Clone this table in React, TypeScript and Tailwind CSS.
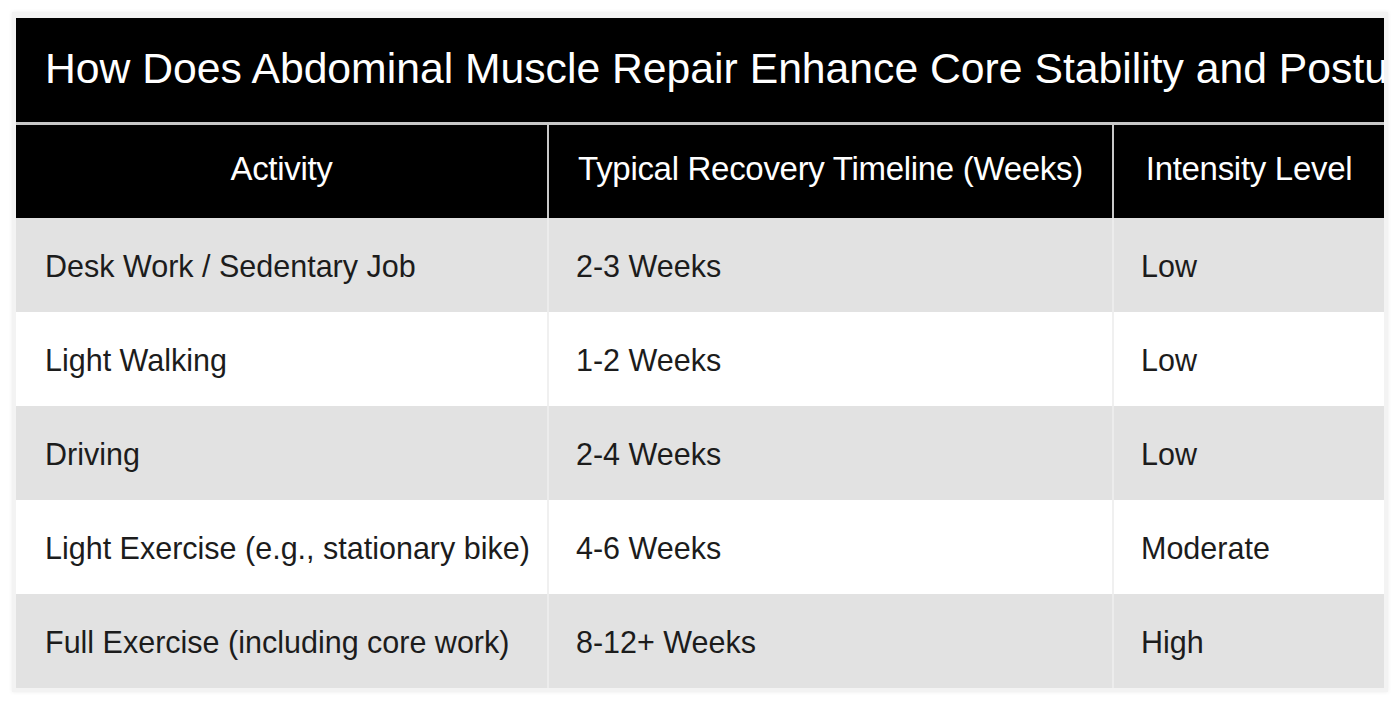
const rows = [
  { activity: "Desk Work / Sedentary Job", timeline: "2-3 Weeks", level: "Low" },
  { activity: "Light Walking", timeline: "1-2 Weeks", level: "Low" },
  { activity: "Driving", timeline: "2-4 Weeks", level: "Low" },
  { activity: "Light Exercise (e.g., stationary bike)", timeline: "4-6 Weeks", level: "Moderate" },
  { activity: "Full Exercise (including core work)", timeline: "8-12+ Weeks", level: "High" },
];

export default function App() {
  return (
    <div className="w-[1400px] h-[703px] bg-white p-3 font-['Liberation_Sans',Arial,sans-serif]">
      <div className="bg-[#f3f3f3] px-1 pt-[6px] pb-1 shadow-[0_0_4px_rgba(0,0,0,0.08)]">
        <div className="h-[104px] bg-black flex items-center px-[29px] overflow-hidden">
          <h1 className="text-white text-[42.7px] whitespace-nowrap pb-[4px]">
            How Does Abdominal Muscle Repair Enhance Core Stability and Posture?
          </h1>
        </div>
        <div className="h-[3px] bg-[#c8c8c8]" />
        <div className="grid grid-cols-[531px_563px_270px] gap-x-[2px] bg-[#c8c8c8] h-[93px]">
          <div className="bg-black text-white text-[33px] tracking-[-0.3px] flex items-center justify-center pb-[6px]">
            Activity
          </div>
          <div className="bg-black text-white text-[33px] tracking-[-0.3px] flex items-center justify-center pb-[6px]">
            Typical Recovery Timeline (Weeks)
          </div>
          <div className="bg-black text-white text-[33px] tracking-[-0.3px] flex items-center justify-center pb-[6px]">
            Intensity Level
          </div>
        </div>
        {rows.map((row, i) => (
          <div
            key={row.activity}
            className={`grid grid-cols-[531px_563px_270px] gap-x-[2px] h-[94px] text-[30.5px] text-[#1c1c1c] ${
              i % 2 === 0 ? "bg-[#ececec]" : "bg-[#f0f0f0]"
            }`}
          >
            {[row.activity, row.timeline, row.level].map((cell, j) => (
              <div
                key={j}
                className={`flex items-center pt-[3px] ${i % 2 === 0 ? "bg-[#e2e2e2]" : "bg-white"} ${
                  j === 0 ? "pl-[29px]" : "pl-[27px]"
                }`}
              >
                {cell}
              </div>
            ))}
          </div>
        ))}
      </div>
    </div>
  );
}
